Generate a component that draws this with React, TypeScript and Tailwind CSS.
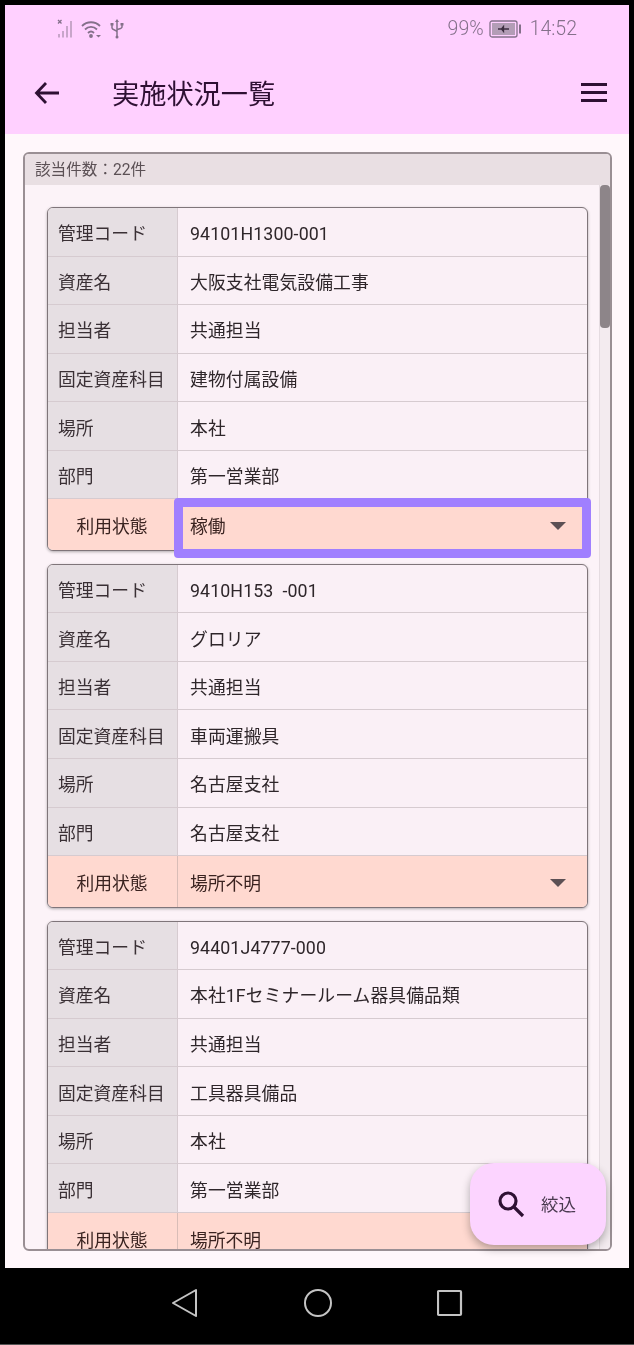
import React from "react";

const FONT = "font-['Roboto','Noto_Sans_CJK_JP',sans-serif]";

type R = [string, string];

function Row({ label, value }: { label: string; value: string }) {
  return (
    <div className="flex h-[48.55px] border-b border-[#d6cbd0]">
      <div className="w-[130px] shrink-0 bg-[#e6dfe3] border-r border-[#d6cbd0] flex items-center pl-[10px] pt-[5px] text-[#3a3035]">{label}</div>
      <div className="flex-1 flex items-center pl-[12px] pt-[5px] text-[#2e262a] whitespace-pre tracking-[0.1px]">{value}</div>
    </div>
  );
}

function Card({ rows, status, highlight }: { rows: R[]; status: string; highlight?: boolean }) {
  return (
    <div className="relative w-[541px] rounded-[6px] border border-[#7f757a] bg-[#faf0f6] shadow-[0_1px_3px_rgba(0,0,0,0.3)]">
      <div className="rounded-t-[5px] overflow-hidden">
        {rows.map(([l, v]) => (
          <Row key={l} label={l} value={v} />
        ))}
      </div>
      <div className="flex h-[51px] bg-[#ffd9d0] rounded-b-[5px] text-[#3a2320]">
        <div className="w-[130px] shrink-0 border-r border-[#d9bdb7] flex items-center justify-center pr-[1px] pt-[5px]">利用状態</div>
        <div className="flex-1 flex items-center justify-between pl-[12px] pr-[21px]">
          <span className="pt-[5px]">{status}</span>
          <svg width="16" height="8" viewBox="0 0 16 8" className="text-[#5c5054] mt-[2px]">
            <path d="M0 0h16l-8 8z" fill="currentColor" />
          </svg>
        </div>
      </div>
      {highlight && (
        <div className="absolute left-[126px] top-[290px] w-[417px] h-[60px] rounded-[4px] border-[9px] border-[#a07fff]" />
      )}
    </div>
  );
}

function StatusLeft() {
  return (
    <div className="flex items-center text-[#84708a]">
      <svg width="20" height="20" viewBox="0 0 20 20" fill="currentColor">
        <path d="M1 1l3.500 3.500M4.500 1L1 4.500" stroke="currentColor" strokeWidth="1.300" />
        <rect x="1" y="15" width="2" height="3.500" opacity=".45" />
        <rect x="5" y="12" width="2" height="6.500" opacity=".45" />
        <rect x="9" y="7" width="2" height="11.500" opacity=".45" />
        <rect x="13" y="2" width="2" height="16.500" opacity=".45" />
      </svg>
      <svg width="22" height="18" viewBox="0 0 22 18" fill="none" stroke="currentColor" strokeWidth="1.800" className="ml-[4px]">
        <path d="M1 6c5-5 13-5 18 0" />
        <path d="M4 9.500c3.500-3.500 8.500-3.500 12 0" />
        <path d="M7 13c2-2 4-2 6 0" />
        <circle cx="10" cy="16" r="1" fill="currentColor" />
        <path d="M15 15l5 0-2.500 2.500z" fill="currentColor" stroke="none" />
      </svg>
      <svg width="14" height="20" viewBox="0 0 14 20" fill="none" stroke="currentColor" strokeWidth="1.500" className="ml-[7px]">
        <path d="M7 3v16M2 6v3c0 2 5 2 5 4M12 6v2c0 2-5 2-5 3" />
        <path d="M7 0l2 3H5z" fill="currentColor" stroke="none" />
        <rect x="0.500" y="4" width="3" height="2.500" fill="currentColor" stroke="none" />
        <rect x="10.500" y="4" width="3" height="2.500" fill="currentColor" stroke="none" />
        <circle cx="7" cy="18" r="1.500" fill="currentColor" stroke="none" />
      </svg>
    </div>
  );
}

function Battery() {
  return (
    <svg width="33" height="18" viewBox="0 0 33 18" className="text-[#84708a] ml-[5px] mr-[8px]">
      <rect x="1" y="1" width="27" height="16" rx="2" fill="none" stroke="currentColor" strokeWidth="1.300" />
      <rect x="3" y="3" width="23" height="12" fill="#b39db6" />
      <rect x="30" y="4.500" width="2" height="9" fill="currentColor" />
      <path d="M9 9h11M14.500 6.500l-2 2.500 2 2.500z" stroke="#3d2d40" strokeWidth="1.300" fill="#3d2d40" />
    </svg>
  );
}

const data: { rows: R[]; status: string; highlight?: boolean }[] = [
  {
    rows: [
      ["管理コード", "94101H1300-001"],
      ["資産名", "大阪支社電気設備工事"],
      ["担当者", "共通担当"],
      ["固定資産科目", "建物付属設備"],
      ["場所", "本社"],
      ["部門", "第一営業部"],
    ],
    status: "稼働",
    highlight: true,
  },
  {
    rows: [
      ["管理コード", "9410H153  -001"],
      ["資産名", "グロリア"],
      ["担当者", "共通担当"],
      ["固定資産科目", "車両運搬具"],
      ["場所", "名古屋支社"],
      ["部門", "名古屋支社"],
    ],
    status: "場所不明",
  },
  {
    rows: [
      ["管理コード", "94401J4777-000"],
      ["資産名", "本社1Fセミナールーム器具備品類"],
      ["担当者", "共通担当"],
      ["固定資産科目", "工具器具備品"],
      ["場所", "本社"],
      ["部門", "第一営業部"],
    ],
    status: "場所不明",
  },
];

export default function App() {
  return (
    <div className={`relative w-[634px] h-[1345px] bg-black overflow-hidden pt-[5px] px-[5px] flex flex-col text-[17.8px] leading-none blur-[0.35px] ${FONT}`}>
      <header className="h-[129px] shrink-0 bg-[#ffd0ff] flex flex-col">
        <div className="h-[48px] flex items-center justify-between pl-[52px] pr-[52px]">
          <StatusLeft />
          <div className="flex items-center text-[#84708a] text-[19.5px] font-light">
            <span>99%</span>
            <Battery />
            <span>14:52</span>
          </div>
        </div>
        <div className="flex-1 flex items-center pl-[29px] pr-[22px] pb-[2px] text-[#2e1033]">
          <svg width="26" height="24" viewBox="0 0 26 24" fill="none" stroke="currentColor" strokeWidth="2.800">
            <path d="M25 12H3M12 2L2.500 12 12 22" />
          </svg>
          <h1 className="ml-[52px] flex-1 pt-[6px] text-[27.2px] font-normal">実施状況一覧</h1>
          <div className="w-[26px] flex flex-col gap-[5px]">
            <div className="h-[3px] bg-current" />
            <div className="h-[3px] bg-current" />
            <div className="h-[3px] bg-current" />
          </div>
        </div>
      </header>

      <main className="h-[1134px] shrink-0 bg-[#fff7fb] pt-[18px] pl-[18px]">
        <div className="relative w-[589px] h-[1099px] rounded-[6px] border-2 border-[#9a8f94] bg-[#fcf3f8] overflow-hidden">
          <div className="h-[31px] bg-[#e9dfe3] flex items-center pl-[10px] pt-[2px] text-[15.600px] text-[#5b5055]">該当件数：22件</div>
          <div className="flex flex-col gap-[12.500px] pt-[22px] pl-[22px]">
            {data.map((d, i) => (
              <Card key={i} {...d} />
            ))}
          </div>
          <div className="absolute right-0 top-[31px] bottom-0 w-[11px] bg-[#f3ebef] border-l border-[#e5dce1]">
            <div className="mx-auto w-[10px] h-[143px] bg-[#8d8589] rounded-[4px]" />
          </div>
        </div>
        <div className="absolute left-[470px] top-[1163px] w-[136px] h-[82px] rounded-[24px] bg-[#fcd4ff] shadow-[0_4px_8px_rgba(0,0,0,0.3)] flex items-center pl-[26px] gap-[15px] text-[#2e1033]">
          <svg width="30" height="30" viewBox="0 0 30 30" fill="none" stroke="currentColor" strokeWidth="3.200">
            <circle cx="12" cy="12" r="8" />
            <path d="M18 18l9 9" />
          </svg>
          <span className="text-[17.500px] pt-[4px] text-[#4a3a50]">絞込</span>
        </div>
      </main>

      <nav className="flex-1 flex items-start justify-center gap-[104px] pt-[20px] -mx-[5px] text-[#c4c4c4] border-b border-[#555]">
        <svg width="28" height="30" viewBox="0 0 28 30" fill="none" stroke="currentColor" strokeWidth="2">
          <path d="M25 2L2 15l23 13z" strokeLinejoin="round" />
        </svg>
        <svg width="30" height="30" viewBox="0 0 30 30" fill="none" stroke="currentColor" strokeWidth="2">
          <circle cx="15" cy="15" r="13" />
        </svg>
        <svg width="26" height="30" viewBox="0 0 26 30" fill="none" stroke="currentColor" strokeWidth="2.200">
          <rect x="1" y="3" width="23" height="24" rx="1" />
        </svg>
      </nav>
    </div>
  );
}
